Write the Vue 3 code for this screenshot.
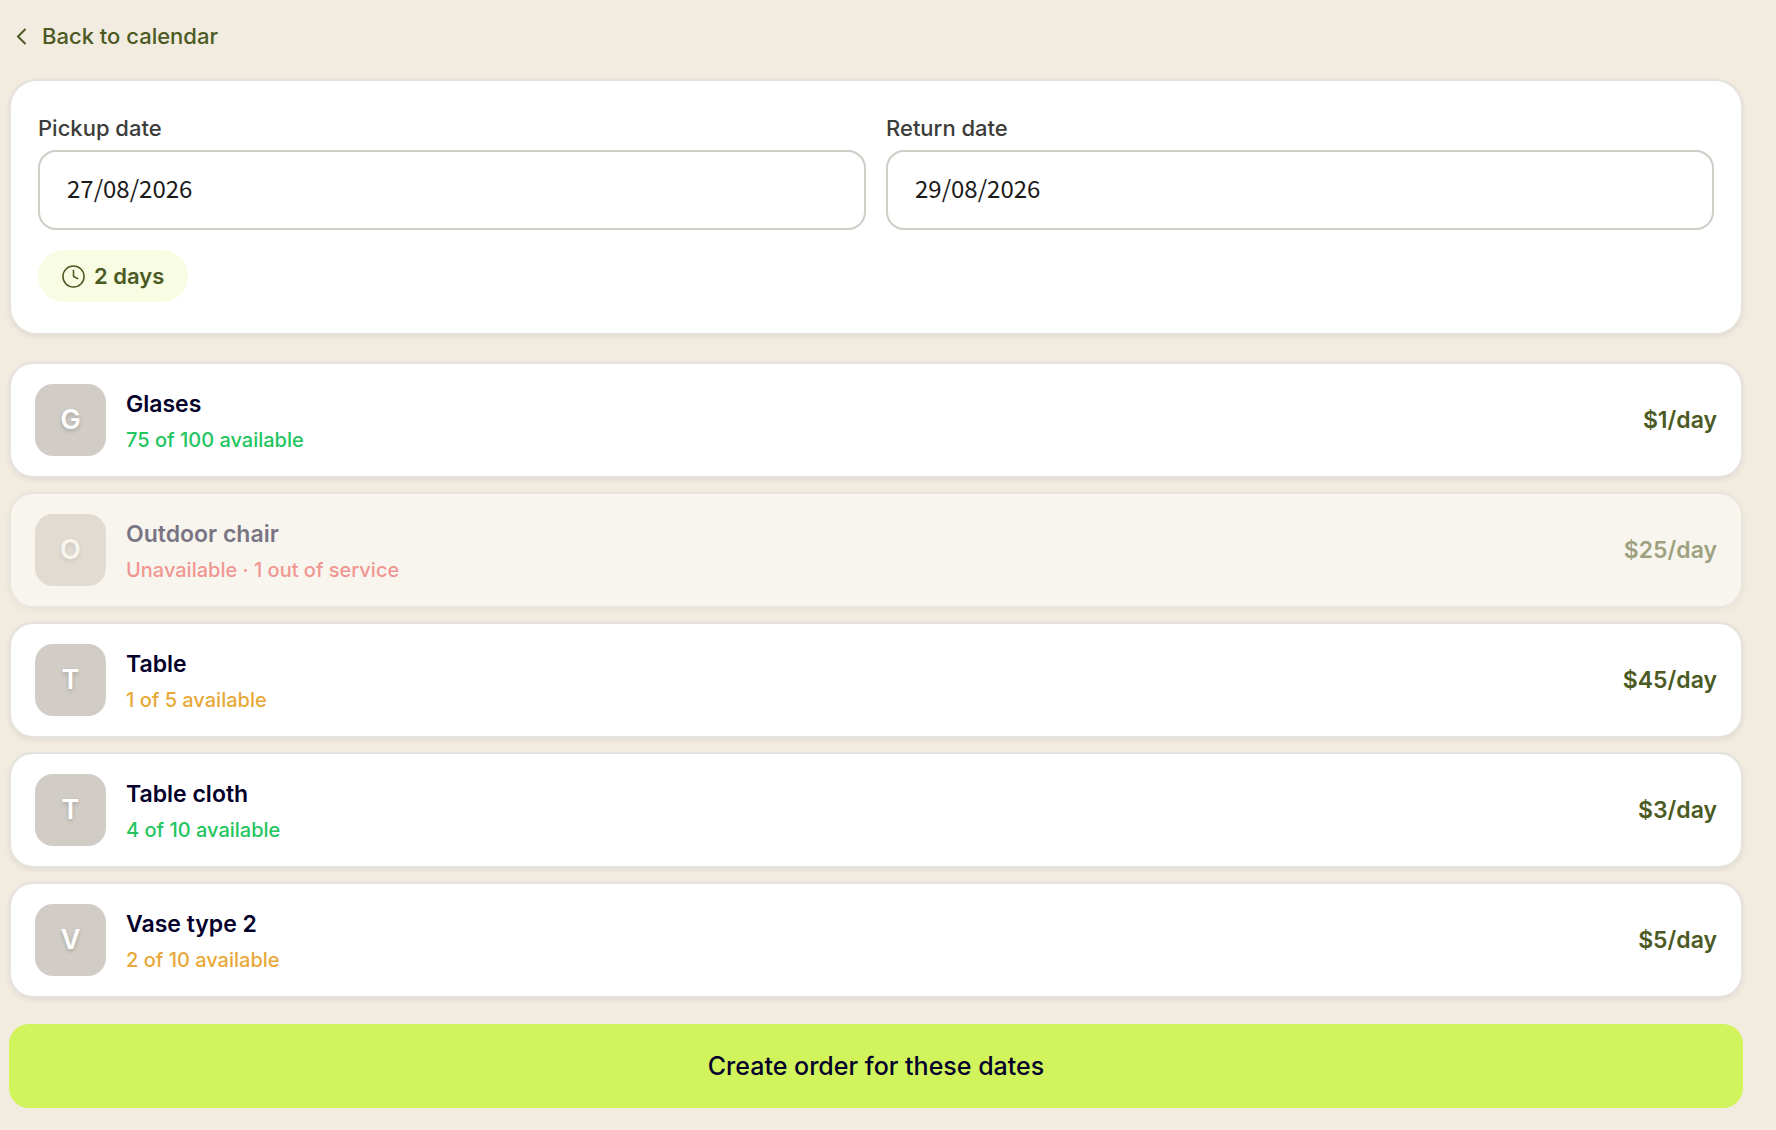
<script setup>
import { ref } from 'vue'

const pickup = ref('27/08/2026')
const dropoff = ref('29/08/2026')

const items = [
  { name: 'Glases', status: '75 of 100 available', tone: 'good', price: '$1/day' },
  { name: 'Outdoor chair', status: 'Unavailable · 1 out of service', tone: 'none', price: '$25/day' },
  { name: 'Table', status: '1 of 5 available', tone: 'low', price: '$45/day' },
  { name: 'Table cloth', status: '4 of 10 available', tone: 'good', price: '$3/day' },
  { name: 'Vase type 2', status: '2 of 10 available', tone: 'low', price: '$5/day' },
]
</script>

<template>
  <main class="page">
    <a class="back" href="#calendar">
      <svg class="chevron" viewBox="0 0 24 24" aria-hidden="true"><path d="M16.5 5l-7.5 7.500 7.500 7.500" /></svg>
      Back to calendar
    </a>

    <section class="panel">
      <div class="dates">
        <div class="field">
          <label for="pickup">Pickup date</label>
          <input id="pickup" v-model="pickup" type="text" inputmode="numeric" />
        </div>
        <div class="field">
          <label for="return">Return date</label>
          <input id="return" v-model="dropoff" type="text" inputmode="numeric" />
        </div>
      </div>
      <span class="pill">
        <svg class="clock" viewBox="0 0 24 24" aria-hidden="true">
          <circle cx="12" cy="12" r="11" />
          <path d="M12 5v7l5 2.500" />
        </svg>
        2 days
      </span>
    </section>

    <ul class="items">
      <li v-for="item in items" :key="item.name" class="item" :class="{ faded: item.tone === 'none' }">
        <span class="avatar" aria-hidden="true">{{ item.name[0] }}</span>
        <div class="info">
          <span class="name">{{ item.name }}</span>
          <span class="status" :class="item.tone">{{ item.status }}</span>
        </div>
        <span class="price">{{ item.price }}</span>
      </li>
    </ul>

    <button class="create" type="button">Create order for these dates</button>
  </main>
</template>

<style>
body {
  background: #f2ebdf;
}
</style>

<style scoped>
.page {
  box-sizing: border-box;
  padding: 20px 33px 22px 9px;
  font-family: Inter, "Noto Sans", sans-serif;
  font-size: 22px;
  line-height: 32px;
  color: #03002a;
}

.back {
  display: inline-flex;
  align-items: center;
  gap: 9px;
  margin-bottom: 27px;
  font-weight: 500;
  color: #4b5a22;
  text-decoration: none;
}

.chevron {
  width: 24px;
  height: 24px;
  fill: none;
  stroke: currentColor;
  stroke-width: 2;
}

.panel,
.item {
  border: 2px solid #e4e2dc;
  background: #fff;
  box-shadow: 0 2px 5px rgba(60, 50, 30, 0.08);
}

.panel {
  padding: 31px 27px;
  border-radius: 28px;
}

.dates {
  display: flex;
  gap: 20px;
}

.field {
  flex: 1;
  display: flex;
  flex-direction: column;
  gap: 6px;
}

.field label {
  font-weight: 500;
  color: #3c3c3a;
}

.field input {
  box-sizing: border-box;
  width: 100%;
  height: 80px;
  padding: 0 27px 6px;
  border: 2px solid #d0ccc6;
  border-radius: 18px;
  background: #fff;
  font-family: "Noto Sans CJK JP", "Noto Sans", sans-serif;
  font-size: 24px;
  color: #1a1a1a;
}

.pill {
  display: inline-flex;
  align-items: center;
  gap: 9px;
  margin-top: 20px;
  padding: 10px 24px;
  border-radius: 26px;
  background: #f8fce2;
  font-weight: 600;
  color: #4b5a22;
}

.clock {
  width: 23px;
  height: 23px;
  fill: none;
  stroke: currentColor;
  stroke-width: 1.6;
}

.items {
  display: flex;
  flex-direction: column;
  gap: 14px;
  margin: 27px 0 26px;
  padding: 0;
  list-style: none;
}

.item {
  display: flex;
  align-items: center;
  gap: 20px;
  padding: 20px 24px;
  border-radius: 24px;
}

.faded {
  opacity: 0.5;
}

.avatar {
  display: flex;
  align-items: center;
  justify-content: center;
  width: 71px;
  height: 72px;
  border-radius: 18px;
  background: #d1cdc6;
  font-size: 27px;
  font-weight: 600;
  color: #fff;
  text-shadow: 0 2px 4px rgba(0, 0, 0, 0.2);
}

.info {
  flex: 1;
  display: flex;
  flex-direction: column;
  gap: 4px;
  padding-top: 4px;
}

.name,
.price {
  font-size: 23px;
  font-weight: 600;
}

.price {
  color: #4b5a22;
}

.status {
  font-size: 20px;
  font-weight: 500;
}

.good {
  color: #22c55e;
}

.low {
  color: #e8a838;
}

.none {
  color: #ef4444;
}

.create {
  width: 100%;
  height: 84px;
  border: 0;
  border-radius: 20px;
  background: #d1f35b;
  font: inherit;
  font-size: 25px;
  font-weight: 500;
  color: inherit;
}
</style>
